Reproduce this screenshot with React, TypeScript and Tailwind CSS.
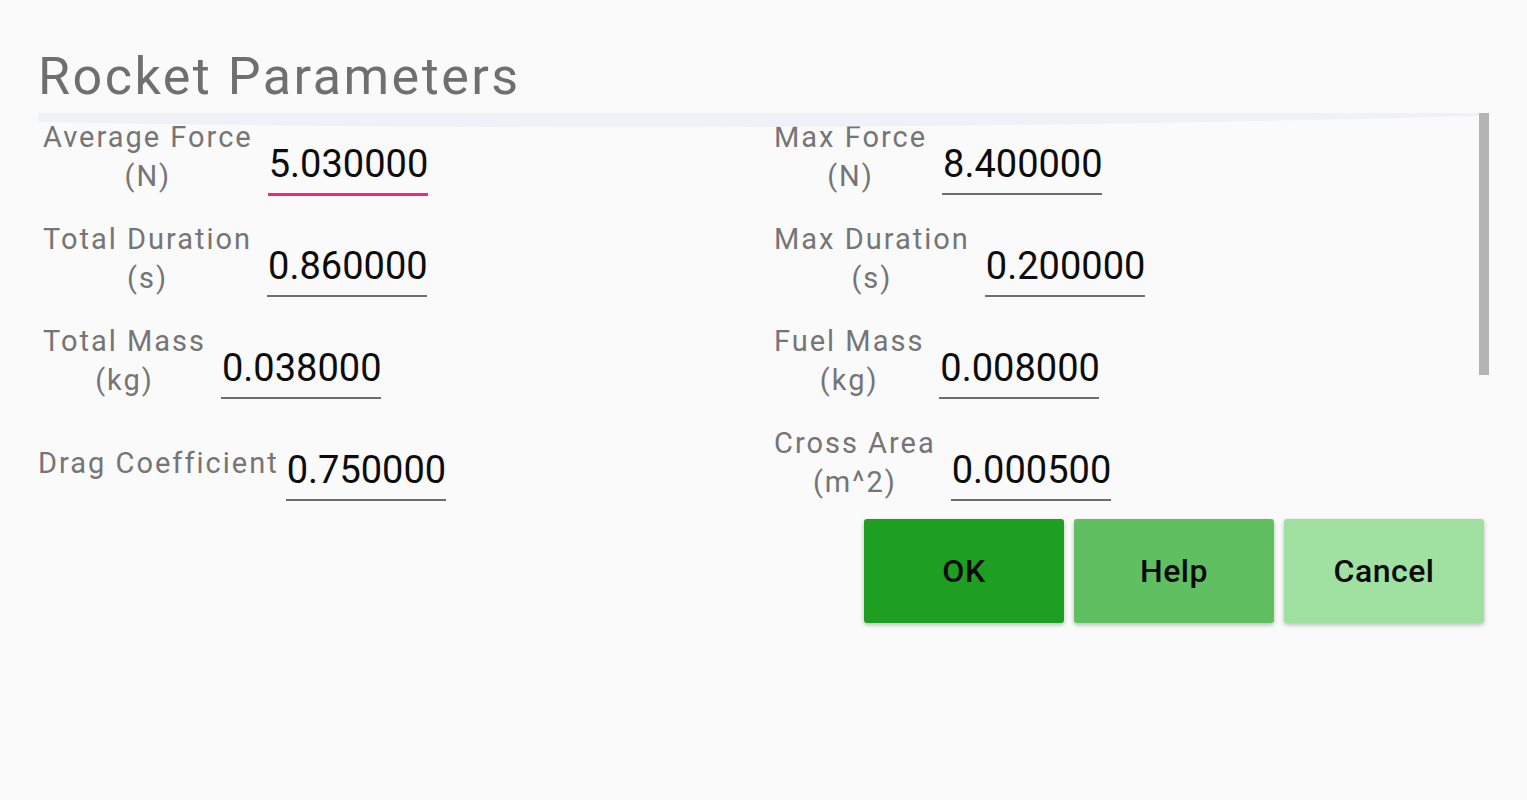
const leftFields = [
  { label: ["Average Force", "(N)"], value: "5.030000", focused: true, inset: true },
  { label: ["Total Duration", "(s)"], value: "0.860000", inset: true },
  { label: ["Total Mass", "(kg)"], value: "0.038000", inset: true },
  { label: ["Drag Coefficient"], value: "0.750000", tight: true },
];

const rightFields = [
  { label: ["Max Force", "(N)"], value: "8.400000" },
  { label: ["Max Duration", "(s)"], value: "0.200000" },
  { label: ["Fuel Mass", "(kg)"], value: "0.008000" },
  { label: ["Cross Area", "(m^2)"], value: "0.000500" },
];

type Field = { label: string[]; value: string; focused?: boolean; inset?: boolean; tight?: boolean };

function FieldRow({ field }: { field: Field }) {
  return (
    <div
      className={
        "flex items-center h-[78px] " +
        (field.tight ? "gap-[7px] " : "gap-[15px] ") +
        (field.inset ? "pl-[5px]" : "")
      }
    >
      <div className="text-center text-[29px] leading-[39px] tracking-[2px] text-[#757575]">
        {field.label.map((l) => (
          <div key={l}>{l}</div>
        ))}
      </div>
      <div className="w-[160px] h-[78px] flex flex-col justify-end">
        <div className="text-[38px] leading-[38px] text-[#0c0c0c] pl-[1px] mb-[10px] whitespace-nowrap">
          {field.value}
        </div>
        {field.focused ? (
          <div className="h-[3px] bg-[#ff2378]" />
        ) : (
          <div className="h-[2px] mb-[1px] bg-[#6e6e6e]" />
        )}
      </div>
    </div>
  );
}

export default function App() {
  return (
    <div className="w-full h-[800px] bg-[#fafafa] font-['Roboto',sans-serif] overflow-hidden">
      <h1 className="pl-[38px] pt-[51px] text-[52px] leading-[52px] tracking-[2.5px] text-[#6f6f6f]">
        Rocket Parameters
      </h1>

      <div className="relative ml-[38px] mt-[10px] w-[1451px] h-[400px] overflow-hidden">
        {/* overscroll glow at top edge */}
        <svg className="absolute left-0 top-0" width="1441" height="16" viewBox="0 0 1441 16" aria-hidden>
          <path d="M0 0 L1441 0 L1441 3 Q720 22 0 9 Z" fill="#eff1f6" />
        </svg>
        <div className="absolute right-0 top-0 w-[10px] h-[262px] bg-[#b4b4b4]" />

        <div className="grid grid-cols-[736px_1fr] pt-[5px]">
          <div className="flex flex-col gap-[24px]">
            {leftFields.map((f) => (
              <FieldRow key={f.value} field={f} />
            ))}
          </div>
          <div className="flex flex-col gap-[24px]">
            {rightFields.map((f) => (
              <FieldRow key={f.value} field={f} />
            ))}
          </div>
        </div>
      </div>

      <div className="flex justify-end gap-[10px] pr-[43px] mt-[6px]">
        <button className="w-[200px] h-[104px] rounded-[3px] bg-[#1e9f22] text-[32px] font-medium tracking-[0.5px] text-[#0a0a0a] shadow-[0_2px_4px_rgba(0,0,0,0.25)]">
          OK
        </button>
        <button className="w-[200px] h-[104px] rounded-[3px] bg-[#60bf60] text-[32px] font-medium tracking-[0.5px] text-[#0a0a0a] shadow-[0_2px_4px_rgba(0,0,0,0.25)]">
          Help
        </button>
        <button className="w-[200px] h-[104px] rounded-[3px] bg-[#a0e0a0] text-[32px] font-medium tracking-[0.5px] text-[#0a0a0a] shadow-[0_2px_4px_rgba(0,0,0,0.25)]">
          Cancel
        </button>
      </div>
    </div>
  );
}
